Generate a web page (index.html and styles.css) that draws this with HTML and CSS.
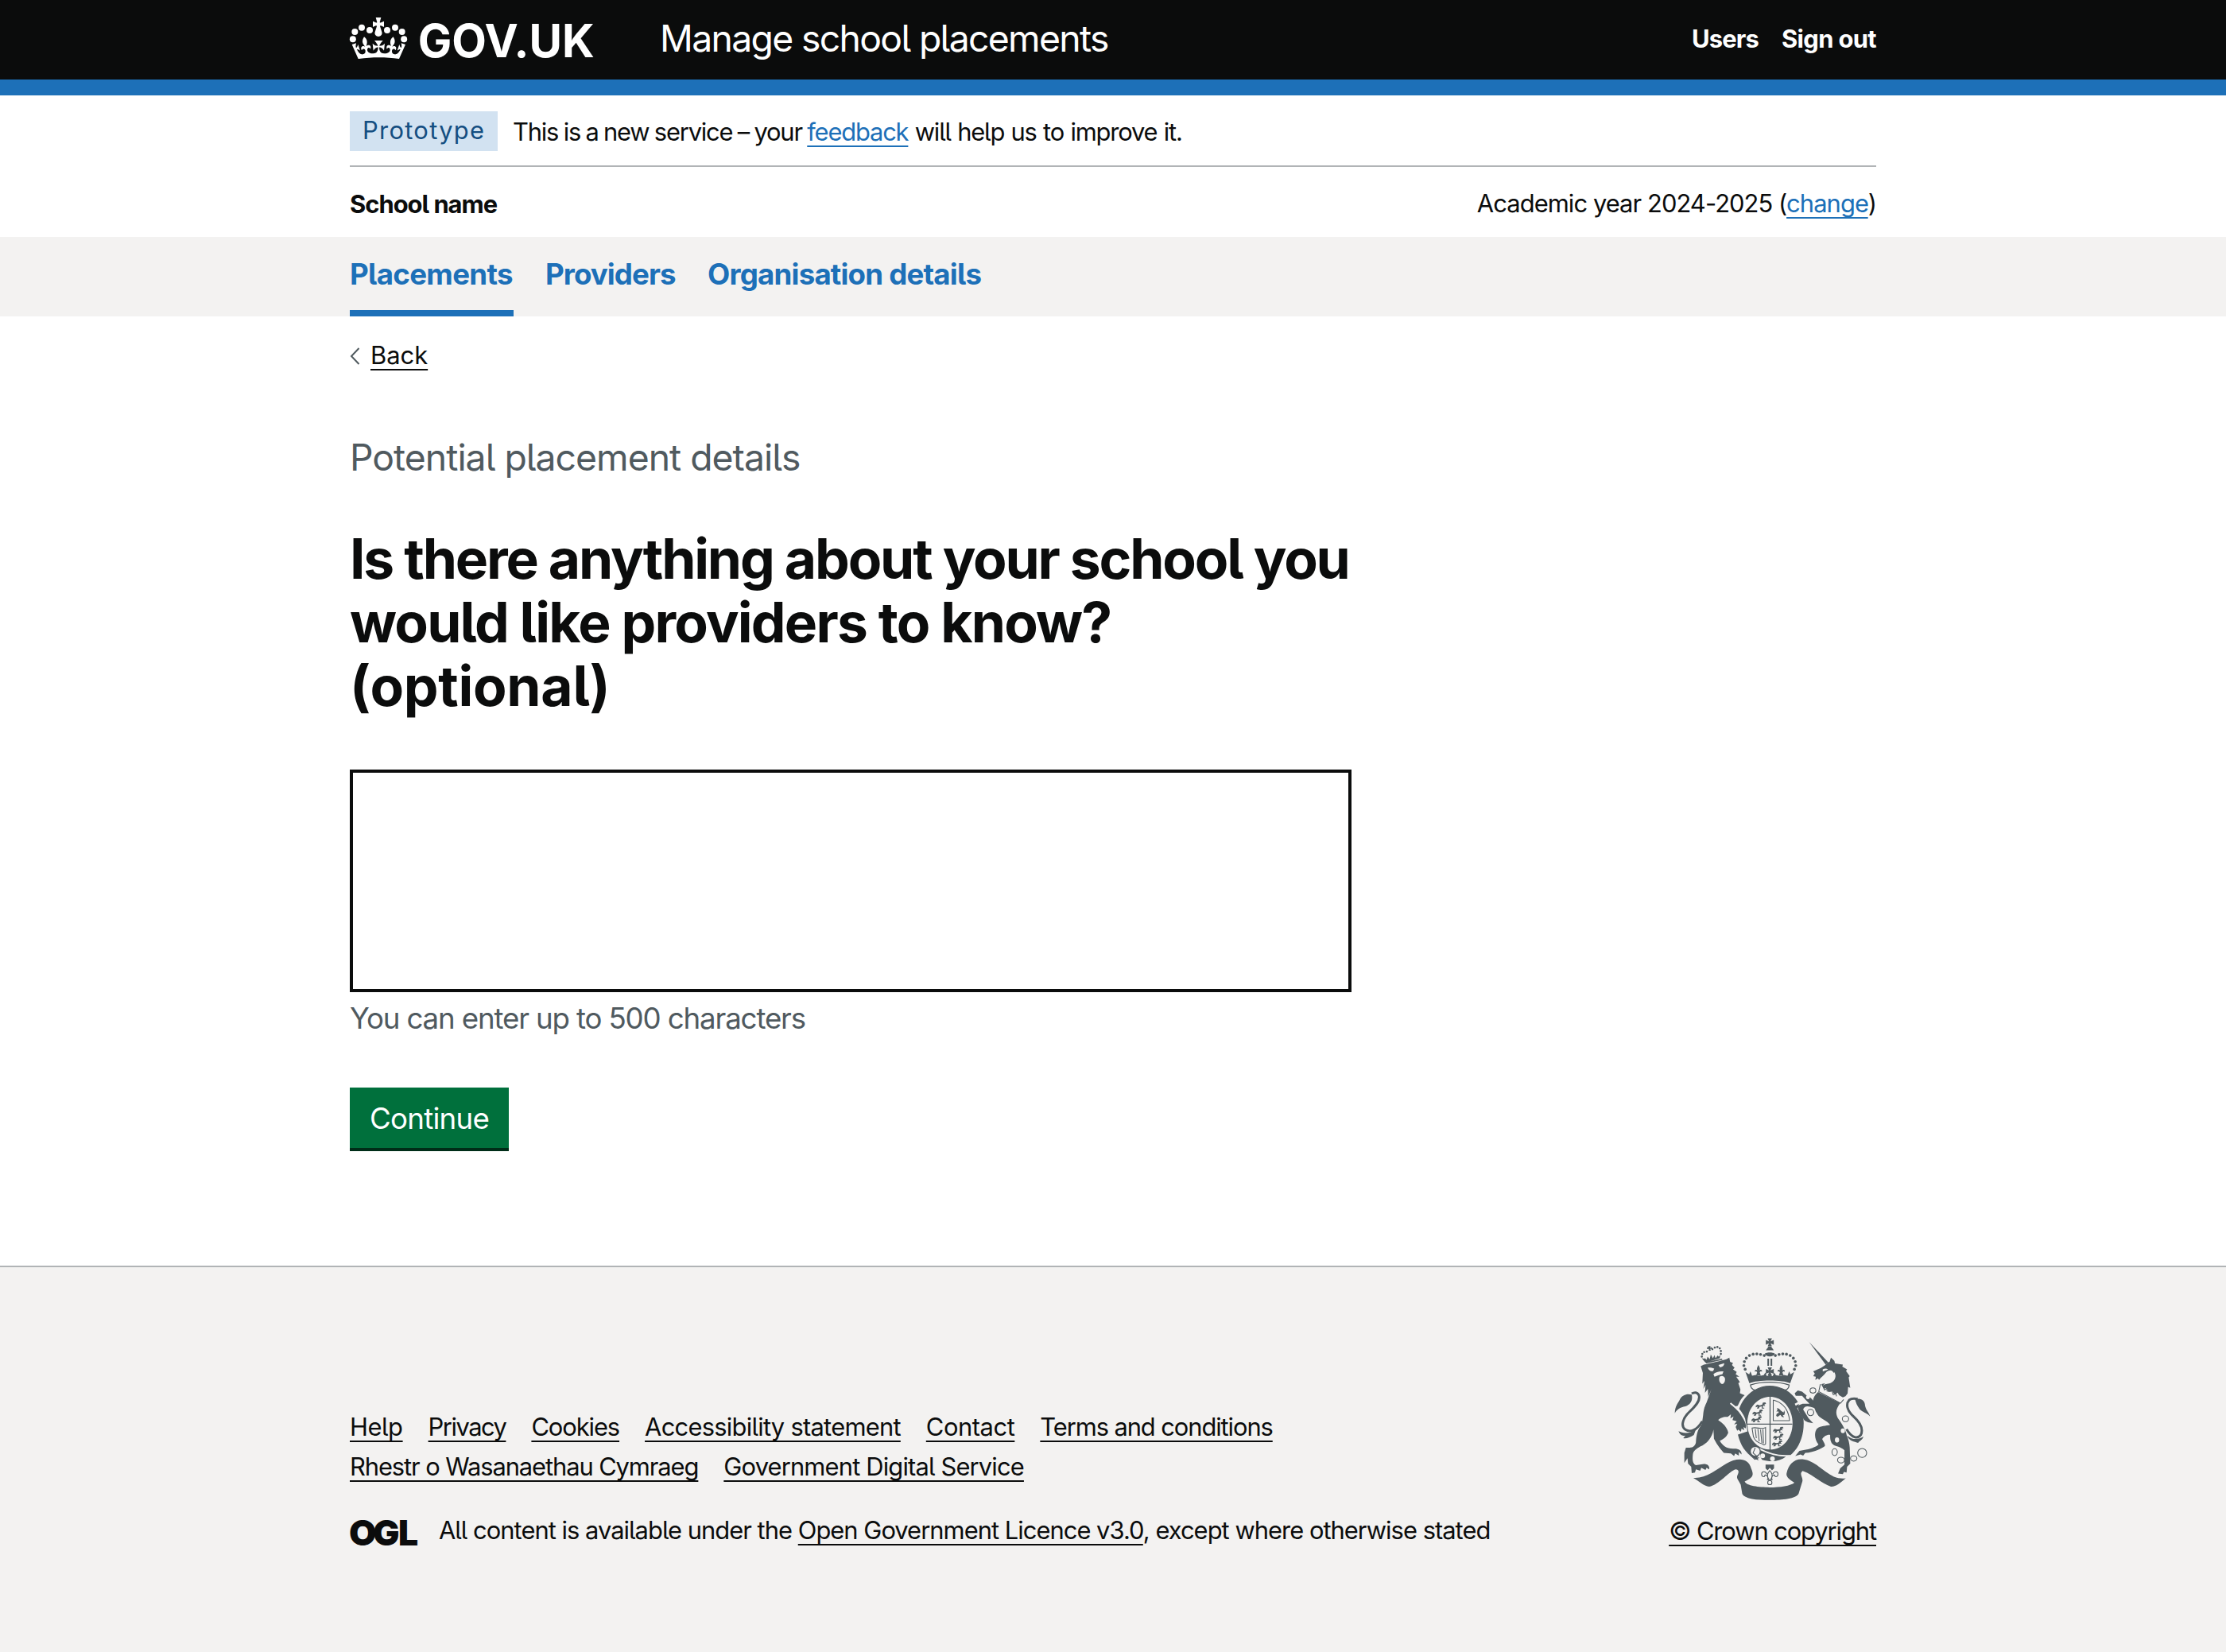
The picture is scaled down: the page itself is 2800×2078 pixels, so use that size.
FILE: index.html
```html
<!DOCTYPE html>
<html lang="en">
<head>
<meta charset="utf-8">
<title>Is there anything about your school you would like providers to know? - Manage school placements - GOV.UK</title>
<link rel="stylesheet" href="styles.css">
</head>
<body>
<header class="header">
  <div class="container header-row">
    <svg class="logo" viewBox="60 66 990 156" role="img" aria-label="GOV.UK">
      <g fill="#fff">
        <circle cx="71.500" cy="148" r="12"/><circle cx="79" cy="120" r="12"/><circle cx="105" cy="104" r="12"/><circle cx="135" cy="114" r="12"/>
        <circle cx="201" cy="114" r="12"/><circle cx="231" cy="104" r="12"/><circle cx="257" cy="120" r="12"/><circle cx="264.500" cy="148" r="12"/>
        <path d="M158 66h20l-5 18c0 2 4 2 16-4v22c-12-6-15-6-15-3l7 22c3 10-5 17-13 17s-16-7-13-17l7-22c0-3-3-3-15 3V80c12 6 16 6 16 4z"/>
        <path d="M92 222L68 168l16-5c-2 9-2 13 0 18 3-3 6-8 7-14l8 24c-4-3-8-5-12-5 7 16 16 20 22 19 8-1 11-8 10-14-2-8-10-9-14-1-7-14 5-19 13-14-12-12-13-23-4-37 13 10 13 21 8 36 8-9 21-4 16 10-6-9-13-4-12 5 1 7 10 13 22 12 17-1 18-14 19-23-5-1-12 3-18 12l-3-27c7 7 13 9 20 9-2-8-13-20-13-20h32s-11 12-13 20c7 0 13-2 20-9l-3 27c-6-9-13-13-18-12 1 9 2 22 19 23 12 1 21-5 22-12 1-9-6-14-12-5-5-14 8-19 16-10-5-15-5-26 8-36 9 14 8 25-4 37 8-5 20 0 13 14-4-8-12-7-14 1-1 6 2 13 10 14 6 1 15-3 22-19-4 0-8 2-12 5l8-24c1 6 4 11 7 14 2-5 2-9 0-18l16 5-24 54c-50-7-102-7-152 0z"/>
        <text class="logo-text" x="317" y="216" textLength="666" lengthAdjust="spacingAndGlyphs">GOV.UK</text>
      </g>
    </svg>
    <a class="service" href="#">Manage school placements</a>
    <nav class="account">
      <a class="users" href="#">Users</a>
      <a class="signout" href="#">Sign out</a>
    </nav>
  </div>
</header>

<div class="container">
  <div class="phase">
    <strong class="tag">Prototype</strong>
    <span class="phase-text"><span class="phase-lead">This is a new service – your </span><a class="link" href="#">feedback</a><span class="phase-tail"> will help us to improve it.</span></span>
  </div>
  <div class="org">
    <strong class="org-name">School name</strong>
    <span class="org-year">Academic year 2024-2025 (<a class="link" href="#">change</a>)</span>
  </div>
</div>

<nav class="primary-nav">
  <div class="container nav-list">
    <a class="nav-item nav-current" href="#">Placements</a>
    <a class="nav-item nav-providers" href="#">Providers</a>
    <a class="nav-item nav-details" href="#">Organisation details</a>
  </div>
</nav>

<div class="container">
  <div class="back">
    <svg class="chevron" viewBox="0 0 13 22"><path d="M11.500 1L2 11l9.500 10" fill="none" stroke="#505a5f" stroke-width="2"/></svg>
    <a class="dark-link" href="#">Back</a>
  </div>
  <main class="main">
    <div class="caption">Potential placement details</div>
    <h1 class="title"><span class="title-a">Is there anything about your school you</span> <span class="title-b">would like providers to know?</span> <span class="title-c">(optional)</span></h1>
    <textarea class="textarea" aria-label="Details"></textarea>
    <div class="hint">You can enter up to 500 characters</div>
    <button class="button" type="button">Continue</button>
  </main>
</div>

<footer class="footer">
  <div class="container footer-row">
    <div class="footer-main">
      <div class="footer-links">
        <a class="dark-link t1" href="#">Help</a>
        <a class="dark-link t5" href="#">Privacy</a>
        <a class="dark-link t4" href="#">Cookies</a>
        <a class="dark-link t2" href="#">Accessibility statement</a>
        <a class="dark-link t1" href="#">Contact</a>
        <a class="dark-link t4" href="#">Terms and conditions</a>
      </div>
      <div class="footer-links">
        <a class="dark-link t4" href="#">Rhestr o Wasanaethau Cymraeg</a>
        <a class="dark-link t3" href="#">Government Digital Service</a>
      </div>
      <div class="licence">
        <svg class="ogl" viewBox="0 -6 90 46" role="img" aria-label="OGL"><text class="ogl-text" x="-1 29 61" y="33">OGL</text></svg>
        <span class="licence-text">All content is available under the <a class="dark-link" href="#">Open Government Licence v3.0</a>, except where otherwise stated</span>
      </div>
    </div>
    <div class="copyright">
      <svg class="crest" viewBox="78 66 742 612" aria-hidden="true">
        <defs>
          <path id="pattee" d="M-8-15H8L3-4 15-9V9L3 4 8 15H-8L-3 4-15 9V-9L-3-4z"/>
          <path id="passant" d="M0 8l6-5 9 3 9-2 3-8 9-1 3 5-7 3 4 6-8-2-2 8h6v3H22l1-8-9 2-2 6H4l4-7-8 3z"/>
          <path id="fleur" d="M0-20C6-10 7-4 4 0c4-5 12-2 9 5-3-3-8-1-8 3l4 12H-9L-5 8c0-4-5-6-8-3-3-7 5-10 9-5-3-4-2-10 4-20z"/>
        </defs>
        <g class="ink">
          <path d="M150 594c45 4 88-32 125-54 40-22 82-24 94 20 10 24 8 32-25 48 6 16 54 22 94 22s80-6 94-18c-18-12-34-22-29-37 6-30 28-54 60-51 44 4 78 46 118 66 16 6 30 8 45 6-24 19-36 32-56 31-40-12-66-46-107-59-15 12 3 24-1 40l-14 46c-10 20-60 24-110 24s-92-4-103-23l-6-35c-8-18-18-24-12-36 8-16 2-22-7-22-24 6-64 60-100 65-20-1-42-23-60-33z"/>
          <path fill-rule="evenodd" d="M440 246c70 0 127 62 127 142 0 84-50 148-127 148S314 472 314 388c0-80 56-142 126-142zm0 42c-48 0-86 44-86 100s38 100 86 100 85-44 85-100-37-100-85-100z"/>
        </g>

        <g transform="translate(300 60)" class="ink">
          <use href="#pattee" x="139" y="22"/>
          <path d="M134 38h10l10 14h-30zM120 65c8-6 30-6 38 0-4 14-34 14-38 0zM130 84h6v27h-6zM142 84h6v27h-6z"/>
          <g>
            <circle cx="118" cy="72" r="5.500"/><circle cx="104" cy="68" r="5.500"/><circle cx="90" cy="66" r="5.500"/><circle cx="76" cy="67" r="5.500"/><circle cx="62" cy="72" r="5.500"/><circle cx="50" cy="82" r="5.500"/><circle cx="43" cy="95" r="5.500"/><circle cx="41" cy="110" r="5.500"/><circle cx="46" cy="124" r="5.500"/>
            <circle cx="160" cy="72" r="5.500"/><circle cx="174" cy="68" r="5.500"/><circle cx="188" cy="66" r="5.500"/><circle cx="202" cy="67" r="5.500"/><circle cx="216" cy="72" r="5.500"/><circle cx="228" cy="82" r="5.500"/><circle cx="235" cy="95" r="5.500"/><circle cx="237" cy="110" r="5.500"/><circle cx="232" cy="124" r="5.500"/>
          </g>
          <use href="#fleur" x="96" y="128"/><use href="#fleur" x="182" y="128"/><use href="#pattee" x="139" y="132"/>
          <path d="M62 177L47 134l14 9 5-11 6 16 14-3 10 5 20-4 6-10 6 14 11-5 11 5 6-14 6 10 20 4 10-5 14 3 6-16 5 11 14-9-15 43c-30-14-124-14-154 0z"/>
          <path class="outline" d="M66 183c40-14 106-14 146 0 0 10-4 16-14 20-40-20-80-20-116 0-10-4-16-10-16-20z"/>
          <path d="M138 228h4v204h-4zM54 329h170v4H54z"/>
          <use href="#passant" x="86" y="254"/><use href="#passant" x="74" y="281"/><use href="#passant" x="70" y="306"/>
          <use href="#passant" x="152" y="346"/><use href="#passant" x="152" y="372"/><use href="#passant" x="148" y="397"/>
          <path class="line" d="M152 240v78h62M152 240c38 10 58 40 62 78"/>
          <path d="M163 300l2-8 8-4-2-5-7 1 4-7-2-7 8 3 8 8 9 6 2-8 3 8-2 9-6 2 5 7-8-1-6-8-6 4-4 4z"/>
          <path class="line" d="M72 346c18-6 34 8 51-2v62c-8 8-10 0-12 0-18-4-30-14-34-28zM84 350l4 34M94 350l5 46M104 352l5 50M113 350l2 54"/>
          <path class="gap" d="M96 424c36 20 74 30 112 28-20 22-60 30-104 20-10-12-14-28-8-48z"/>
          <path d="M104 430c32 16 66 24 96 24-22 18-56 22-90 12-8-10-10-22-6-36zM130 428l24 2-2 8c-6 2-20-2-22-10z"/>
          <circle class="outline" cx="84" cy="434" r="19"/><path class="line" d="M84 420l-8 20 18 16M66 448l16 16 16-6"/>
          <circle class="paper" cx="112" cy="451" r="9"/><circle class="paper" cx="149" cy="462" r="9"/>
          <path d="M123 484h32v14l-8 8-8-10-8 10-8-8z"/>
          <path class="line" d="M139 506c-12 14-10 22-4 34M139 506c12 14 10 22 4 34M132 540c0-14-6-18-12-16 2 8-12 8-12-4 0-10 14-14 20 0M146 540c0-14 6-18 12-16-2 8 12 8 12-4 0-10-14-14-20 0M128 541h22"/>
          <circle class="line" cx="139" cy="552" r="8"/>
        </g>

        <g transform="translate(60 60)">
          <path class="gap" d="M228 250c24 14 44 36 54 62l8 44-30 10-24-30z"/>
          <path class="ink" d="M118 112l12-6c30-6 65-14 85-20l11-6 3 16 11 4-4 8 10 10-6 6 14 10-4 8 14 10-12 0 14 20-6 4 8 24-2 14 18 8c-16 14-20 28-26 40l-8 2-18-14-4 4c17 14 34 28 44 46 8 14 20 28 16 47l-8-5 2 12-10-6-2 12-10-8-4 4-6-14 6-12-12 2 10-12-16-4 4-14-12 8 2-16-12 10c-15-2-30 4-36 12 16 11 34 26 38 48-7 18-22 26-32 30 10 18 25 30 50 30 22-2 34 8 32 22l-10-10v14l-14-8-4 10-12-10-27-2-15-18-12-18-10-18-2-34c-4 30-26 55-50 64-16 10-26 16-28 31-2 20 0 35 12 39l30-4c15 0 22 8 20 20l-10-6-4 8-16-8-4 11-16-5-4 12-12 2-2-24-12-12-2-20-12 18V440l6-20h14c14 0 24-10 24-24 4-46 15-51 22-66 8-40 3-50 18-80l18-50-12 28-1-30-11 15 2-30-8 15 4-30-8 10 2-40z"/>
          <path class="paper" d="M144 118c8-2 16 0 25 3l-4 9c-9 3-14 0-21-12zM185 108l22-7c0 8-5 14-16 16zM166 142c8-8 24-12 38-10l-4 10-14 4-16 6zM188 156c2-10 20-10 22 4 0 12-4 18-12 20-8-4-12-12-10-24z"/>
          <path class="tail" d="M124 320c-22 36-46 44-64 32-20-14-8-46 15-67 25-23 43-44 36-63-6-12-17-12-27-6"/>
          <path class="ink" d="M20 290c0-28 14-40 20-54 8-14 26-22 44-16 4 20-2 36-24 44-20 4-32 12-40 26zM34 358c16 8 42 12 66-8l-8 22c-14 10-28 14-40 12l8-10c-12 4-20-2-26-16z"/>
          <g class="ink">
            <path d="M130 92l-8-10 8 2 4-2 6 6 4-12 8 10 4-18 8 14 6-12 4 12 8-10 4 4 6-6-2 12-54 17zM136 97l62-13 2 4-61 14zM145 38l10-2-2 6 7-2v8l-6-2 2 8h-8l1-7-7 1v-8l5 2z"/>
            <circle cx="122" cy="76" r="4"/><circle cx="124" cy="66" r="4"/><circle cx="131" cy="59" r="4"/><circle cx="141" cy="57" r="4"/><circle cx="162" cy="48" r="4"/><circle cx="171" cy="42" r="4"/><circle cx="181" cy="40" r="4"/><circle cx="190" cy="45" r="4"/><circle cx="194" cy="55" r="4"/><circle cx="194" cy="66" r="4"/>
          </g>
        </g>

        <g transform="translate(525 60)">
          <path class="gap" d="M30 250l-8 22 30 48M10 258l14-8"/>
          <path class="ink" d="M63 21l72 77-10 8z"/>
          <path class="ink" d="M124 108l10-10 6-2 5-16 13 12 2 10 30 4-2 8 18 10-4 6 14 20-4 4 6 40-8-4-2 25-8 11-10 4-14-8-6-10-10 8-10-12-15 2-7-16-10 4-8-14c-5-8 15-6 30-8 18-8 26-26 20-40-10-11-25-11-34 0-8 12-18 16-26 28l-4-6-10 6 2-12-10-2 6-10-6-8 30-14z"/>
          <path class="ink" d="M124 106l36 4 12 26-6 30-14 12-18 2c12-10 24-20 24-40l-12-14z"/>
          <path class="paper" d="M114 124c8-4 14-4 20 0-8 4-14 6-20 8zM157 134c10 12 6 34-14 42-14 4-20 2-28 10 10-16 36-16 42-52z"/>
          <path class="line" d="M105 180l-6 28 82 44 12-14M117 192l4 10 8-6 2 12M150 210l4 10 10-4 2 10"/>
          <path class="ink" d="M96 210l84 42c-15 20-20 36-8 58 13 18 28 40 33 65 7 15 10 30 11 45l2 60-12 12-2 22-10-2-4 8-18-2 8-20 16-14v-54c-16-14-31-14-41-20-13-10-13-25-13-38-12-2-24 6-30 16 6 12 12 20 10 26-22 16-52 24-74 26l-8 10-10-4-20 6 16-20 24-4c25-6 40-12 48-20-14-18-18-42-6-60 13-10 33-10 50-14-12-16-32-22-44-34-14-18-20-40-20-60 2-15 12-23 18-30z"/>
          <path class="ink" d="M8 214l12-10 16 4 16 14 16 10 14 14 4 26c-26-10-41-12-46 4l20 32 18 20-20-4-12-6c-13-18-24-33-28-56l20-8h26l-14-14-14-16H12z"/>
          <path class="tail" d="M204 350c20 34 42 38 54 22 12-26-8-52-28-70-24-22-30-46-16-62 10-8 22-6 32-4"/>
          <path class="ink" d="M236 238c22-8 38 4 38 24 4 18 14 24 19 40-15-16-31-16-41-30-8-10-12-20-16-34zM206 374c24 20 44 14 62 4-4 14-18 18-20 24-14-6-34-6-42-28z"/>
          <g class="line"><ellipse cx="77" cy="204" rx="11" ry="10"/><ellipse cx="68" cy="287" rx="12" ry="12"/><ellipse cx="200" cy="311" rx="12" ry="11"/><ellipse cx="159" cy="437" rx="10" ry="13"/><ellipse cx="183" cy="467" rx="13" ry="11"/><ellipse cx="231" cy="461" rx="12" ry="10"/><circle cx="263" cy="440" r="17"/></g>
          <ellipse class="paper" cx="58" cy="229" rx="7" ry="8"/><ellipse class="paper" cx="190" cy="356" rx="8" ry="9"/><ellipse class="paper" cx="168" cy="391" rx="8" ry="10"/>
        </g>
      </svg>
      <a class="dark-link t4" href="#">© Crown copyright</a>
    </div>
  </div>
</footer>
</body>
</html>
```
FILE: styles.css
```css
* { box-sizing: border-box; }

body {
  margin: 0;
  background: #fff;
  color: #0b0c0c;
  font-family: Inter, Roboto, "Liberation Sans", sans-serif;
  font-size: 30.9px;
  line-height: 40px;
  font-feature-settings: "cv05";
}

a { color: inherit; text-decoration: none; }

.container { width: 1920px; margin: 0 auto; }

.link, .dark-link {
  text-decoration: underline;
  text-decoration-thickness: 2px;
  text-underline-offset: 6px;
  text-decoration-skip-ink: none;
}
.link { color: #1d70b8; }

/* Header */
.header { height: 120px; background: #0b0c0c; border-bottom: 20px solid #1d70b8; color: #fff; }
.header-row { display: flex; align-items: flex-start; }
.logo { width: 330px; height: 52px; margin-top: 22px; overflow: visible; }
.logo-text { font-size: 174px; font-weight: 700; }
.service { margin: 18px 0 0 60px; font-size: 46.3px; line-height: 60px; letter-spacing: -1.66px; }
.account { display: flex; gap: 29px; margin: 29px 0 0 auto; font-weight: 700; }
.users { letter-spacing: -.84px; }
.signout { letter-spacing: -.64px; }

/* Phase banner */
.phase { display: flex; align-items: flex-start; gap: 19px; height: 90px; padding-top: 20px; border-bottom: 2px solid #b1b4b6; }
.tag { width: 186px; height: 50px; padding-left: 16px; background: #d2e2f1; color: #144e81; font-weight: 400; line-height: 47px; letter-spacing: 1.3px; }
.phase-text { margin-top: 6px; letter-spacing: -1.19px; white-space: pre; }
.phase-lead { word-spacing: -1.1px; }
.phase-tail { word-spacing: .9px; }

.org { display: flex; justify-content: space-between; height: 88px; padding-top: 26px; }
.org-name { margin-top: 1px; letter-spacing: -1px; }
.org-year { letter-spacing: -.93px; }

/* Primary navigation */
.primary-nav { height: 100px; background: #f3f2f1; }
.nav-list { display: flex; gap: 40px; height: 100%; }
.nav-item { padding-top: 22px; color: #1d70b8; font-size: 36.7px; font-weight: 700; line-height: 50px; white-space: nowrap; }
.nav-current { width: 206px; border-bottom: 8px solid #1d70b8; letter-spacing: -.7px; }
.nav-providers { width: 164px; letter-spacing: -.95px; }
.nav-details { letter-spacing: -.82px; }

/* Question page */
.back { display: flex; align-items: flex-start; gap: 13px; padding-top: 29px; }
.chevron { width: 13px; height: 22px; margin-top: 10px; }
.main { width: 1260px; padding-top: 78px; }
.caption { color: #505a5f; font-size: 46.3px; line-height: 60px; letter-spacing: -.98px; }
.title { margin: 58px 0 0; font-size: 69.5px; font-weight: 700; line-height: 80px; }
.title span { display: block; white-space: nowrap; }
.title-a { letter-spacing: -2.2px; }
.title-b { letter-spacing: -1.8px; }
.title-c { letter-spacing: -.3px; }
.textarea { display: block; width: 1260px; height: 280px; margin: 65px 0 0; border: 4px solid #0b0c0c; border-radius: 0; background: #fff; resize: none; }
.hint { margin-top: 8px; color: #505a5f; font-size: 36.7px; line-height: 50px; letter-spacing: -1.16px; }
.button { display: block; width: 200px; height: 76px; margin: 62px 0 0; padding: 1px 0 0; border: 0; background: #00703c; box-shadow: 0 4px 0 #002d18; color: #fff; font: inherit; font-size: 36.7px; letter-spacing: -.75px; }

/* Footer */
.footer { height: 486px; margin-top: 148px; border-top: 2px solid #b1b4b6; background: #f3f2f1; }
.footer-row { display: flex; justify-content: space-between; }
.footer-main { padding-top: 176px; }
.footer-links { display: flex; gap: 32px; line-height: 50px; }
.licence { display: flex; align-items: flex-start; gap: 22px; margin-top: 35px; }
.ogl { width: 90px; height: 46px; overflow: visible; }
.ogl-text { font-size: 44.5px; font-weight: 900; fill: #0b0c0c; }
.licence-text { letter-spacing: -.98px; white-space: nowrap; }
.copyright { display: flex; flex-direction: column; align-items: flex-end; padding-top: 89px; }
.crest { width: 247px; height: 204px; margin: 0 7px 19px 0; }

.t1 { letter-spacing: -.45px; }
.t2 { letter-spacing: -.75px; }
.t3 { letter-spacing: -.85px; }
.t4 { letter-spacing: -1.1px; }
.t5 { letter-spacing: -1.5px; }

/* Royal arms */
.ink { fill: #505a5f; }
.paper { fill: #f3f2f1; }
.gap { fill: #f3f2f1; stroke: #f3f2f1; stroke-width: 8; }
.outline { fill: #f3f2f1; stroke: #505a5f; stroke-width: 4; }
.line { fill: none; stroke: #505a5f; stroke-width: 3.2; }
.tail { fill: none; stroke: #505a5f; stroke-width: 9; }
```
